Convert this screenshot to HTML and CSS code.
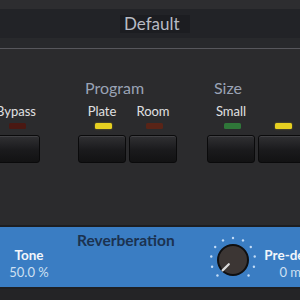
FILE: index.html
```html
<!DOCTYPE html>
<html lang="en">

<head>
    <meta charset="UTF-8">
    <meta name="viewport" content="width=device-width, initial-scale=1.0">
    <title>Reverb</title>
    <link rel="stylesheet" href="styles.css">
</head>

<body>
    <div class="top_strip"></div>
    <div class="preset_bar">
        <span class="preset_name">Default</span>
    </div>
    <div class="sub_bar"></div>

    <div class="controls">
        <div class="group group_bypass">
            <div class="group_title"></div>
            <div class="switches">
                <div class="switch">
                    <span class="switch_label">Bypass</span>
                    <span class="led led_red"></span>
                    <button class="button"></button>
                </div>
            </div>
        </div>

        <div class="group group_program">
            <div class="group_title">Program</div>
            <div class="switches">
                <div class="switch">
                    <span class="switch_label">Plate</span>
                    <span class="led led_yellow"></span>
                    <button class="button"></button>
                </div>
                <div class="switch">
                    <span class="switch_label">Room</span>
                    <span class="led led_red_dim"></span>
                    <button class="button"></button>
                </div>
            </div>
        </div>

        <div class="group group_size">
            <div class="group_title">Size</div>
            <div class="switches">
                <div class="switch">
                    <span class="switch_label">Small</span>
                    <span class="led led_green"></span>
                    <button class="button"></button>
                </div>
                <div class="switch">
                    <span class="switch_label">&nbsp;</span>
                    <span class="led led_yellow"></span>
                    <button class="button"></button>
                </div>
            </div>
        </div>
    </div>

    <div class="reverb_panel">
        <div class="param param_tone">
            <div class="param_name">Tone</div>
            <div class="param_value">50.0 %</div>
        </div>
        <div class="panel_title">Reverberation</div>
        <svg class="knob" width="56" height="56" viewBox="0 0 56 56">
            <g fill="#c2dcf7">
                <circle cx="12.44" cy="43.56" r="1.2"/>
                <circle cx="7.08" cy="34.8" r="1.2"/>
                <circle cx="6.27" cy="24.56" r="1.2"/>
                <circle cx="10.2" cy="15.07" r="1.2"/>
                <circle cx="18.01" cy="8.4" r="1.2"/>
                <circle cx="28" cy="6" r="1.2"/>
                <circle cx="37.99" cy="8.4" r="1.2"/>
                <circle cx="45.8" cy="15.07" r="1.2"/>
                <circle cx="49.73" cy="24.56" r="1.2"/>
                <circle cx="48.92" cy="34.8" r="1.2"/>
                <circle cx="43.56" cy="43.56" r="1.2"/>
            </g>
            <circle cx="28" cy="28" r="15" fill="#3c3634" stroke="#0f0f10" stroke-width="2"/>
            <line x1="23.8" y1="32.2" x2="17.6" y2="38.4" stroke="#dadada" stroke-width="2.2" stroke-linecap="round"/>
        </svg>
        <div class="param param_predelay">
            <div class="param_name">Pre-delay</div>
            <div class="param_value">0 ms</div>
        </div>
    </div>
    <div class="bottom_strip"></div>
</body>

</html>
```

FILE: styles.css
```css
body {
    font-family: Lato, "Open Sans", sans-serif;
    background-color: #2b2b2d;
    margin: 0;
    padding: 0;
    width: 300px;
    height: 300px;
    overflow: hidden;
}

.top_strip {
    height: 9px;
    background-color: #2d2d30;
}

.preset_bar {
    height: 29px;
    background-color: #222327;
    display: flex;
    justify-content: center;
    align-items: center;
}

.preset_name {
    display: block;
    width: 70px;
    height: 18px;
    margin-left: 10px;
    padding-left: 4px;
    box-sizing: border-box;
    background-color: #1c1d21;
    color: #b8bbc4;
    font-size: 17px;
    line-height: 18px;
}

.sub_bar {
    height: 10px;
    background-color: #28292c;
    border-bottom: 1px solid #57575c;
}

/* switch groups */
.controls {
    display: flex;
    margin-left: -8px;
    padding-top: 30px;
    height: 148px;
    box-sizing: border-box;
}

.group_title {
    height: 18px;
    line-height: 18px;
    padding-left: 7px;
    font-size: 16px;
    color: #9aa3b5;
    margin-bottom: 6px;
}

.group_program {
    margin-left: 38px;
}

.group_size {
    margin-left: 30px;
}

.switches {
    display: flex;
    gap: 3px;
}

.switch {
    display: flex;
    flex-direction: column;
    align-items: center;
    width: 48px;
}

.switch_label {
    font-size: 13px;
    line-height: 16px;
    color: #e0e0e2;
    white-space: nowrap;
}

.led {
    display: block;
    width: 17px;
    height: 6px;
    border-radius: 1.5px;
    margin-top: 4px;
    margin-left: 2px;
    margin-bottom: 6px;
}

.led_red {
    background-color: #4a1812;
}

.led_red_dim {
    background-color: #592417;
}

.led_yellow {
    background-color: #e7d021;
    box-shadow: 0 0 2px rgba(231, 208, 33, 0.5);
}

.led_green {
    background-color: #2f7739;
}

.button {
    display: block;
    width: 48px;
    height: 28px;
    padding: 0;
    border: 1px solid #0a0a0b;
    border-radius: 3px;
    background: linear-gradient(#303033, #1a1a1c 55%, #121213);
    box-shadow: inset 0 1px 0 rgba(255, 255, 255, 0.09);
    cursor: pointer;
}

/* blue reverb panel */
.reverb_panel {
    display: flex;
    align-items: flex-start;
    height: 60px;
    margin-top: 28px;
    overflow: hidden;
    background-color: #3a7dc3;
    border-top: 2px solid #1d1e21;
    border-bottom: 2px solid #1e1f22;
}

.reverb_panel > * {
    flex-shrink: 0;
}

.param {
    text-align: center;
    margin-top: 20px;
}

.param_tone {
    width: 58px;
}

.param_predelay {
    margin-left: 0;
    width: 64px;
}

.param_name {
    font-size: 13.5px;
    font-weight: bold;
    line-height: 17px;
    color: #f2f6fb;
    white-space: nowrap;
}

.param_value {
    font-size: 13px;
    line-height: 17px;
    color: #cfe0f2;
    white-space: nowrap;
}

.panel_title {
    width: 147px;
    box-sizing: border-box;
    padding-left: 19px;
    margin-top: 6px;
    font-size: 15.5px;
    font-weight: bold;
    line-height: 14px;
    color: #1b3250;
    white-space: nowrap;
}

.knob {
    display: block;
    margin-top: 5px;
}

.bottom_strip {
    height: 12px;
    background-color: #242426;
}
```
